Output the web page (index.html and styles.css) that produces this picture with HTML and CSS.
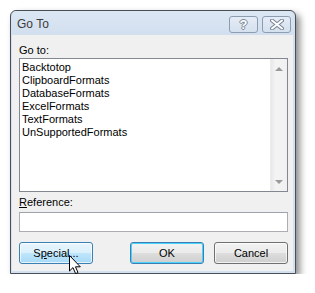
FILE: index.html
```html
<!DOCTYPE html>
<html lang="en">
<head>
    <meta charset="UTF-8">
    <title>Go To</title>
    <link rel="stylesheet" href="styles.css">
</head>
<body>
    <div class="window">
        <div class="titlebar">
            <span class="title">Go To</span>
            <div class="caption-buttons">
                <div class="caption-btn help">?</div>
                <div class="caption-btn close">
                    <svg width="14" height="11" viewBox="0 0 14 11">
                        <path d="M2 1.5 L12 9.5 M12 1.5 L2 9.5" stroke="#7a8696" stroke-width="4" stroke-linecap="round"/>
                        <path d="M2 1.5 L12 9.5 M12 1.5 L2 9.5" stroke="#ffffff" stroke-width="2" stroke-linecap="round"/>
                    </svg>
                </div>
            </div>
        </div>

        <div class="content">
            <div class="label">Go to:</div>
            <div class="listbox">
                <ul class="items">
                    <li>Backtotop</li>
                    <li>ClipboardFormats</li>
                    <li>DatabaseFormats</li>
                    <li>ExcelFormats</li>
                    <li>TextFormats</li>
                    <li>UnSupportedFormats</li>
                </ul>
                <div class="scrollbar">
                    <span class="arrow up"></span>
                    <span class="arrow down"></span>
                </div>
            </div>

            <div class="label ref-label"><u>R</u>eference:</div>
            <div class="textbox"></div>

            <div class="buttons">
                <button class="btn hover">S<u>p</u>ecial...</button>
                <div class="btn-group">
                    <button class="btn default">OK</button>
                    <button class="btn">Cancel</button>
                </div>
            </div>
        </div>

        <svg class="cursor" width="13" height="20" viewBox="0 0 13 20">
            <path d="M0.5 0.5 L0.5 16 L4 12.6 L6.6 18.6 L9 17.6 L6.5 11.8 L11.3 11.8 Z" fill="#ffffff" stroke="#000000" stroke-width="1" stroke-linejoin="miter"/>
        </svg>
    </div>
</body>
</html>
```

FILE: styles.css
```css
* {
    margin: 0;
    padding: 0;
    box-sizing: border-box;
}

body {
    background: #ffffff;
    font-family: 'Liberation Sans', Arial, sans-serif;
    font-size: 11px;
    color: #000;
}

.window {
    position: relative;
    margin: 10px 0 0 10px;
    width: 286px;
    height: 264px;
    border: 1px solid #4a4f57;
    border-radius: 6px 6px 0 0;
    background: #d3e0ef;
    padding: 0 2px 2px 1px;
    box-shadow: 4px 4px 7px rgba(0, 0, 0, 0.45);
    display: flex;
    flex-direction: column;
}

.titlebar {
    height: 24px;
    display: flex;
    align-items: center;
    justify-content: space-between;
    padding: 0 2px 0 5px;
    background: linear-gradient(#dce7f4 0%, #d2dfee 100%);
    border-radius: 5px 5px 0 0;
}

.title {
    font-size: 12px;
    color: #3b3b3b;
    margin-top: 1px;
}

.caption-buttons {
    display: flex;
    gap: 4px;
    margin-top: 2px;
}

.caption-btn {
    width: 29px;
    height: 17px;
    border: 1px solid #8d9db1;
    border-radius: 3px;
    background: linear-gradient(#e4ecf6 0%, #d5e1ef 100%);
    display: flex;
    align-items: center;
    justify-content: center;
}

.help {
    font-size: 13px;
    font-weight: bold;
    color: #ffffff;
    text-shadow: -1px 0 #7a8696, 1px 0 #7a8696, 0 -1px #7a8696, 0 1px #7a8696;
}

.content {
    flex: 1;
    background: #f0f0f0;
    padding: 8px 5px 0 7px;
}

.label {
    line-height: 15px;
    height: 15px;
}

.listbox {
    height: 134px;
    border: 1px solid #828790;
    background: #ffffff;
    display: flex;
}

.items {
    list-style: none;
    flex: 1;
    padding: 2px 0 0 2px;
}

.items li {
    line-height: 13px;
    height: 13px;
}

.scrollbar {
    width: 17px;
    background: linear-gradient(90deg, #e8e8e8 0%, #f4f4f4 30%, #f0f0f0 100%);
    border-left: 1px solid #ededed;
    display: flex;
    flex-direction: column;
    justify-content: space-between;
    align-items: center;
    padding: 8px 0 7px;
}

.arrow {
    width: 0;
    height: 0;
    border-left: 4px solid transparent;
    border-right: 4px solid transparent;
}

.arrow.up {
    border-bottom: 4px solid #9a9a9a;
}

.arrow.down {
    border-top: 4px solid #9a9a9a;
}

.ref-label {
    margin-top: 3px;
    line-height: 14px;
    height: 14px;
}

.textbox {
    margin-top: 3px;
    height: 20px;
    width: 269px;
    border: 1px solid #abadb3;
    border-top-color: #9da3ad;
    background: #ffffff;
}

.buttons {
    margin-top: 10px;
    width: 269px;
    display: flex;
    justify-content: space-between;
}

.btn-group {
    display: flex;
    gap: 10px;
}

.btn {
    width: 74px;
    height: 22px;
    border: 1px solid #707070;
    border-radius: 3px;
    font-family: 'Liberation Sans', Arial, sans-serif;
    font-size: 11px;
    color: #000;
    background: linear-gradient(#f2f2f2 0%, #ebebeb 48%, #dddddd 52%, #cfcfcf 100%);
    box-shadow: inset 0 0 0 1px rgba(255, 255, 255, 0.7);
}

.btn.hover {
    border-color: #3c7fb1;
    background: linear-gradient(#eaf6fd 0%, #d9f0fc 48%, #bee6fd 52%, #a7d9f5 100%);
}

.btn.default {
    border-color: #3c7fb1;
    box-shadow: inset 0 0 0 1px #48d2fd;
}

.cursor {
    position: absolute;
    left: 58px;
    top: 244px;
}
```
